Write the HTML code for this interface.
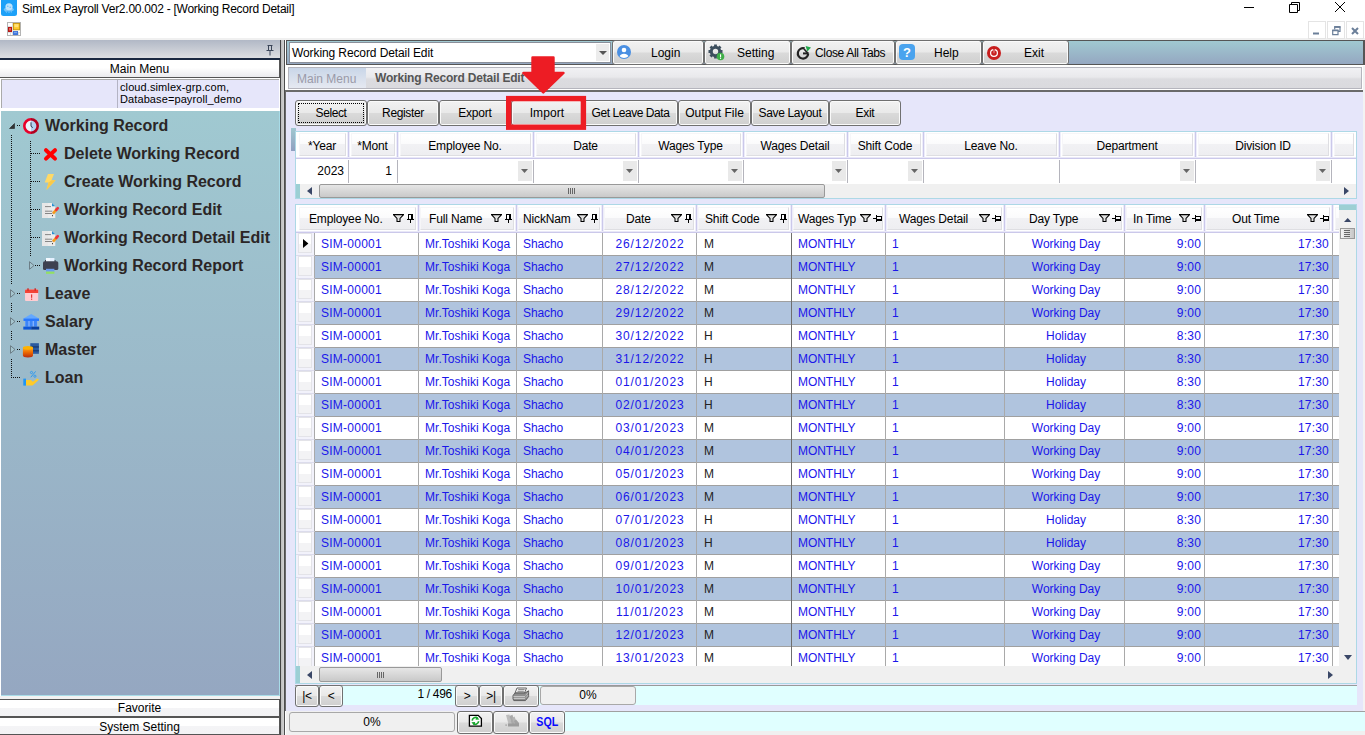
<!DOCTYPE html><html><head><meta charset="utf-8"><title>SimLex Payroll</title><style>
*{box-sizing:border-box;margin:0;padding:0}
html,body{width:1365px;height:735px;overflow:hidden;background:#fff}
body{font-family:"Liberation Sans",sans-serif;font-size:12px;color:#000;position:relative}
.a{position:absolute}
.t{position:absolute;white-space:pre;line-height:14px}
.c{text-align:center}
.r{text-align:right}
/* left panel */
#lp-head{left:0;top:40px;width:280px;height:20px;background:linear-gradient(#b1b8c6,#dddee1);border-bottom:2px solid #1a2840}
#lp-mm{left:0;top:60px;width:280px;height:18px;background:linear-gradient(#ffffff 0,#ffffff 45%,#ebebee 100%);border-bottom:1px solid #555;border-right:1px solid #555}
#lp-info{left:1px;top:79px;width:278px;height:29px;background:#e6e6fa;border-top:1px solid #aaa;border-left:1px solid #aaa}
#lp-tree{left:1px;top:111px;width:279px;height:585px;border-bottom:1px solid #a8dce8;border-right:1px solid #a8dce8;background:linear-gradient(#a0c9d1,#95a7c1)}
.bar{left:0;width:280px;background:linear-gradient(#ffffff 0,#ffffff 50%,#f4f4f6 50%,#f3f3f5 100%);border-right:1px solid #555}
.tn{position:absolute;white-space:pre;font-weight:700;font-size:16px;line-height:20px;color:#2b2626}
/* splitter */
#split{left:280px;top:40px;width:6px;height:695px;background:linear-gradient(90deg,#444 0,#444 1px,#bdbdbd 1px,#d2d2d2 4px,#4d4d4d 4px,#4d4d4d 5px,#fff 5px)}
/* right */
#tb{left:286px;top:40px;width:1079px;height:25px;background:linear-gradient(#a0c9d1,#95a7c1);border:1px solid #555;border-right:2px solid #555}
.tbb{position:absolute;top:40px;height:25px;border:1px solid #6f6f6f;border-radius:3px;box-shadow:inset 0 0 0 1px #fafafa;background:linear-gradient(#f2f2f2 0,#e9e9e9 48%,#dadada 52%,#cfcfcf 100%)}
#tabs{left:288px;top:67px;width:1074px;height:22px;background:linear-gradient(#f1f1f4 0,#e9e9ec 45%,#dcdce0 55%,#dadade 100%);border:1px solid #b5b5bd}
#content{left:285px;top:90px;width:1078px;height:621px;background:#e6e6fa;border-top:2px solid #6a6a6a;border-left:1px solid #6a6a6a}
.btn{position:absolute;top:100px;height:26px;letter-spacing:-0.3px;white-space:nowrap;border:1px solid #707070;border-radius:3px;box-shadow:inset 0 0 0 1px #fafafa;background:linear-gradient(#f2f2f2 0,#e9e9e9 48%,#dadada 52%,#cfcfcf 100%);text-align:center;line-height:24px;font-size:12px}
.hb{position:absolute;height:23px;border:1px solid;border-color:#f6f6f8 #dedee2 #dedee2 #f6f6f8;background:linear-gradient(#ffffff 0,#fbfbfc 48%,#f1f1f4 50%,#eeeef1 100%)}
.hs{position:absolute;width:3px;background:linear-gradient(90deg,#ededfa 0,#ededfa 1px,#cbc8ea 1px,#cbc8ea 2px,#ededfa 2px)}
.hl{position:absolute;height:2px;background:linear-gradient(#e9e8f8 0,#e9e8f8 1px,#cbc8ea 1px)}
.hc{position:absolute;border:1px solid #d3cfee;background:linear-gradient(#ffffff 0,#fafafb 50%,#f0f0f3 50%,#ececf0 100%);box-shadow:inset 0 0 0 2px #fcfcff,inset -3px -3px 0 0 #e2e2e6}
.row{position:absolute;left:315px;width:1024px;height:23px;border-bottom:1px solid #a5a5a5}
.vl{position:absolute;width:1px;background:#a9a9a9}
.bl{color:#1a16ea}
</style></head><body>
<div class="a" style="left:0;top:38px;width:1365px;height:2px;background:#f0f0f0"></div>
<svg class="a" style="left:1px;top:0" width="16" height="16" viewBox="0 0 16 16"><path d="M0 0H16V13.5A2.5 2.5 0 0 1 13.5 16H2.5A2.5 2.5 0 0 1 0 13.5Z" fill="#1da1f8"/><ellipse cx="8" cy="6.8" rx="3.6" ry="3.5" fill="#d9eefd" opacity=".85"/><ellipse cx="7.8" cy="9.4" rx="5" ry="2" fill="#bfe2fb" opacity=".55"/><path d="M4.5 11.5L6 12.5M8 11.8V13M11 11.5L9.8 12.6" stroke="#bfe2fb" stroke-width=".8" opacity=".7"/><circle cx="6.8" cy="6.3" r=".7" fill="#5bb8f8"/><circle cx="9.2" cy="7.2" r=".7" fill="#5bb8f8"/></svg>
<div class="t" style="left:22px;top:2px;font-size:12px;letter-spacing:-0.25px">SimLex Payroll Ver2.00.002 - [Working Record Detail]</div>
<svg class="a" style="left:1230px;top:0" width="135" height="20" viewBox="0 0 135 20"><g stroke="#000" stroke-width="1" fill="none"><path d="M14 7.5H24"/><path d="M59.5 4.5h8v8h-8z M61.5 4.5v-2h8v8h-2" /><path d="M105 2L115 12M115 2L105 12"/></g></svg>
<svg class="a" style="left:7px;top:22px" width="14" height="14" viewBox="0 0 14 14"><rect x="0.5" y="0.5" width="13" height="13" fill="#fff" stroke="#b4b4b4"/><path d="M5.5 1V13M1 4.5H5.5M1 10.5H13M11.5 10.5V13M3.5 10.5V13" stroke="#d8d8d8" stroke-width=".8"/><rect x="1" y="5" width="4" height="5" fill="#b81414"/><rect x="2" y="6" width="2" height="2.5" fill="#e06a5a"/><rect x="6.4" y="1.4" width="6.2" height="6.4" fill="#ffc928" stroke="#c39206" stroke-width=".9"/><rect x="7.4" y="2.2" width="4" height="3" fill="#ffe27a"/><rect x="6" y="9" width="5" height="4" fill="#3f74d8"/><rect x="7" y="9.8" width="3" height="1.4" fill="#7aa5f0"/></svg>
<svg class="a" style="left:1308px;top:21px" width="57" height="18" viewBox="0 0 57 18"><g fill="none" stroke="#e4e4e4"><rect x="0.5" y="0.5" width="17" height="17"/><rect x="19.5" y="0.5" width="17" height="17"/><rect x="38.5" y="0.5" width="17" height="17"/></g><g stroke="#6b7f99" fill="none"><path d="M5 12.5h6" stroke-width="2"/><path d="M26.7 8.6V6.2h5.3v4.2h-1.6 M24.7 9.6h5.3v4h-5.3z" stroke-width="1.2"/><path d="M26.2 5.9h6.3M24.2 9.3h6.3" stroke-width="1.6"/><path d="M44 7l6 6M50 7l-6 6" stroke-width="2"/></g></svg>
<div class="a" id="lp-head"></div>
<svg class="a" style="left:266px;top:45px" width="8" height="11" viewBox="0 0 8 11"><path d="M1.5 0.5h5M2.5 0.5v5M5.5 0.5v5M0.5 5.5h7M4 6v4.5" stroke="#3a4558" fill="none"/></svg>
<div class="a" id="lp-mm"></div><div class="t c" style="left:0;top:62px;width:279px">Main Menu</div>
<div class="a" id="lp-info"></div><div class="a" style="left:117px;top:80px;width:1px;height:28px;background:#b4b4c4"></div>
<div class="t" style="left:120px;top:81px;font-size:11px;line-height:12px;letter-spacing:0.1px">cloud.simlex-grp.com,
Database=payroll_demo</div>
<div class="a" id="lp-tree"></div>
<div class="a" style="left:11px;top:135px;width:1px;height:150px;background:repeating-linear-gradient(#111 0,#111 1px,transparent 1px,transparent 2px)"></div>
<div class="a" style="left:11px;top:303px;width:1px;height:10px;background:repeating-linear-gradient(#111 0,#111 1px,transparent 1px,transparent 2px)"></div>
<div class="a" style="left:11px;top:331px;width:1px;height:10px;background:repeating-linear-gradient(#111 0,#111 1px,transparent 1px,transparent 2px)"></div>
<div class="a" style="left:11px;top:359px;width:1px;height:19px;background:repeating-linear-gradient(#111 0,#111 1px,transparent 1px,transparent 2px)"></div>
<div class="a" style="left:30px;top:141px;width:1px;height:116px;background:repeating-linear-gradient(#111 0,#111 1px,transparent 1px,transparent 2px)"></div>
<div class="a" style="left:17px;top:125px;width:4px;height:1px;background:repeating-linear-gradient(90deg,#111 0,#111 1px,transparent 1px,transparent 2px)"></div>
<div class="a" style="left:31px;top:153px;width:9px;height:1px;background:repeating-linear-gradient(90deg,#111 0,#111 1px,transparent 1px,transparent 2px)"></div>
<div class="a" style="left:31px;top:181px;width:9px;height:1px;background:repeating-linear-gradient(90deg,#111 0,#111 1px,transparent 1px,transparent 2px)"></div>
<div class="a" style="left:31px;top:209px;width:9px;height:1px;background:repeating-linear-gradient(90deg,#111 0,#111 1px,transparent 1px,transparent 2px)"></div>
<div class="a" style="left:31px;top:237px;width:9px;height:1px;background:repeating-linear-gradient(90deg,#111 0,#111 1px,transparent 1px,transparent 2px)"></div>
<div class="a" style="left:35px;top:265px;width:5px;height:1px;background:repeating-linear-gradient(90deg,#111 0,#111 1px,transparent 1px,transparent 2px)"></div>
<div class="a" style="left:17px;top:293px;width:4px;height:1px;background:repeating-linear-gradient(90deg,#111 0,#111 1px,transparent 1px,transparent 2px)"></div>
<div class="a" style="left:17px;top:321px;width:4px;height:1px;background:repeating-linear-gradient(90deg,#111 0,#111 1px,transparent 1px,transparent 2px)"></div>
<div class="a" style="left:17px;top:349px;width:4px;height:1px;background:repeating-linear-gradient(90deg,#111 0,#111 1px,transparent 1px,transparent 2px)"></div>
<div class="a" style="left:11px;top:377px;width:9px;height:1px;background:repeating-linear-gradient(90deg,#111 0,#111 1px,transparent 1px,transparent 2px)"></div>
<svg class="a" style="left:9px;top:123px" width="6" height="6" viewBox="0 0 6 6"><path d="M5.5 0.5V5.5H0.5Z" fill="#333" stroke="#222" stroke-width=".6"/></svg>
<svg class="a" style="left:29px;top:261px" width="6" height="9" viewBox="0 0 6 9"><path d="M0.5 0.7L5 4.5L0.5 8.3Z" fill="#a5c5cf" stroke="#66767f" stroke-width=".9"/></svg>
<svg class="a" style="left:10px;top:289px" width="6" height="9" viewBox="0 0 6 9"><path d="M0.5 0.7L5 4.5L0.5 8.3Z" fill="#a5c5cf" stroke="#66767f" stroke-width=".9"/></svg>
<svg class="a" style="left:10px;top:317px" width="6" height="9" viewBox="0 0 6 9"><path d="M0.5 0.7L5 4.5L0.5 8.3Z" fill="#a5c5cf" stroke="#66767f" stroke-width=".9"/></svg>
<svg class="a" style="left:10px;top:345px" width="6" height="9" viewBox="0 0 6 9"><path d="M0.5 0.7L5 4.5L0.5 8.3Z" fill="#a5c5cf" stroke="#66767f" stroke-width=".9"/></svg>
<svg class="a" style="left:20px;top:114px" width="42" height="276" viewBox="20 114 42 276">
<defs><clipPath id="cl"><rect x="20" y="114" width="11" height="30"/></clipPath><clipPath id="cr"><rect x="31" y="114" width="11" height="30"/></clipPath></defs>
<circle cx="31" cy="126" r="6.7" fill="#edf3fb" stroke="#e8002a" stroke-width="2.6" clip-path="url(#cl)"/><circle cx="31" cy="126" r="6.7" fill="#b3d1f1" stroke="#b3001f" stroke-width="2.6" clip-path="url(#cr)"/><path d="M31 122.3V126.3L32.8 127.6" stroke="#2c3a55" stroke-width="1" fill="none"/>
<path d="M46 150.2L55 158.6M55 150.2L46 158.6" stroke="#ff0000" stroke-width="4" stroke-linecap="round"/>
<path d="M48 174H54L51.5 180.2H55.6L46.4 189.9L48.6 182.6H44.7Z" fill="#ffd966"/><path d="M51.5 180.2H55.6L46.4 189.9L48.6 182.6Z" fill="#f9c94a"/>
<g transform="translate(0,0)"><path d="M42 203H52L55.3 206.3V218H42Z" fill="#ececec"/><path d="M42 203H48V218H42Z" fill="#e4e4e4" opacity=".6"/><path d="M52 203L55.3 206.3H52Z" fill="#2a8fd0"/><path d="M45 206.6H51M45 211.2H52.3M45 213.5H52.3" stroke="#7b7b7b" stroke-width="0.9"/><path d="M53 213.6L56.7 209.2" stroke="#f39a1e" stroke-width="2.6" stroke-linecap="butt"/><path d="M56.3 209.8L57.8 208.1" stroke="#f0303a" stroke-width="2.6" stroke-linecap="round"/><path d="M52 214.2L53.6 214.9L51.9 216.2Z" fill="#f7e3c2"/><rect x="52" y="215.2" width="1" height="1" fill="#222"/></g>
<g transform="translate(0,28)"><path d="M42 203H52L55.3 206.3V218H42Z" fill="#ececec"/><path d="M42 203H48V218H42Z" fill="#e4e4e4" opacity=".6"/><path d="M52 203L55.3 206.3H52Z" fill="#2a8fd0"/><path d="M45 206.6H51M45 211.2H52.3M45 213.5H52.3" stroke="#7b7b7b" stroke-width="0.9"/><path d="M53 213.6L56.7 209.2" stroke="#f39a1e" stroke-width="2.6" stroke-linecap="butt"/><path d="M56.3 209.8L57.8 208.1" stroke="#f0303a" stroke-width="2.6" stroke-linecap="round"/><path d="M52 214.2L53.6 214.9L51.9 216.2Z" fill="#f7e3c2"/><rect x="52" y="215.2" width="1" height="1" fill="#222"/></g>
<rect x="46" y="258" width="8.4" height="4.5" fill="#e4f0ff"/><rect x="46" y="258" width="4" height="4.5" fill="#f4f9ff"/><rect x="43" y="261.3" width="15.3" height="8.8" rx="1.6" fill="#3d4150"/><rect x="45" y="260" width="1" height="2" fill="#3d4150"/><rect x="54.6" y="260" width="1" height="2" fill="#3d4150"/><rect x="46" y="268.8" width="8.4" height="2.8" fill="#6a9cf0"/><rect x="46" y="271.6" width="8.4" height="2.2" fill="#93e062"/>
<rect x="25" y="289.6" width="13.2" height="11.3" rx="1" fill="#ffcdd2"/><path d="M25 290.4a1 1 0 0 1 1-1h11.2a1 1 0 0 1 1 1V293H25Z" fill="#f44336"/><rect x="27.3" y="288.3" width="1.4" height="2.4" fill="#c62828"/><rect x="34.5" y="288.3" width="1.4" height="2.4" fill="#c62828"/><rect x="31" y="294.4" width="1.2" height="3.4" fill="#e53935"/><rect x="31" y="298.6" width="1.2" height="1.2" fill="#e53935"/>
<path d="M31.2 314L39 318.4V319H23.5V318.4Z" fill="#64a8ff"/><rect x="23.5" y="318.6" width="15.5" height="2.4" fill="#2979ff"/><rect x="25" y="321" width="12.4" height="5.6" fill="#82b1ff"/><rect x="25.4" y="321" width="2.9" height="5.6" fill="#3d86f7"/><rect x="29.7" y="321" width="2.9" height="5.6" fill="#3d86f7"/><rect x="34" y="321" width="2.9" height="5.6" fill="#3d86f7"/><rect x="23.3" y="326.6" width="8" height="3" fill="#0d57d8"/><rect x="31.2" y="326.6" width="8" height="3" fill="#0a3f9e"/>
<defs><linearGradient id="cy" x1="0" y1="0" x2="0" y2="1"><stop offset="0" stop-color="#f9a825"/><stop offset=".45" stop-color="#ef6c00"/><stop offset="1" stop-color="#b72d10"/></linearGradient></defs>
<rect x="30.3" y="343.2" width="8.6" height="10.6" fill="#2a5aa0"/><rect x="30.3" y="346.2" width="8.6" height="1.5" fill="#1a3e78"/><rect x="30.3" y="350" width="8.6" height="1.5" fill="#1a3e78"/><path d="M22.9 347.8V355.6A5.05 1.9 0 0 0 33 355.6V347.8Z" fill="url(#cy)"/><ellipse cx="27.95" cy="347.8" rx="5.05" ry="1.9" fill="#ffb300"/>
<rect x="23.3" y="378.6" width="2.7" height="7" fill="#2196f3"/><path d="M26 380H31L32.8 381.8L37.4 378.4L38.9 379.8L32.6 385.6H26Z" fill="#ffca28"/><path d="M30.8 377.3L35.6 371.4" stroke="#2196f3" stroke-width="0.9"/><circle cx="31.5" cy="372.5" r="1.1" fill="none" stroke="#2196f3" stroke-width=".8"/><circle cx="34.9" cy="376.2" r="1.1" fill="none" stroke="#2196f3" stroke-width=".8"/>
</svg>
<div class="tn" style="left:45px;top:116px">Working Record</div>
<div class="tn" style="left:64px;top:144px">Delete Working Record</div>
<div class="tn" style="left:64px;top:172px">Create Working Record</div>
<div class="tn" style="left:64px;top:200px">Working Record Edit</div>
<div class="tn" style="left:64px;top:228px">Working Record Detail Edit</div>
<div class="tn" style="left:64px;top:256px">Working Record Report</div>
<div class="tn" style="left:45px;top:284px">Leave</div>
<div class="tn" style="left:45px;top:312px">Salary</div>
<div class="tn" style="left:45px;top:340px">Master</div>
<div class="tn" style="left:45px;top:368px">Loan</div>
<div class="a" style="left:0;top:696px;width:280px;height:3px;background:#f2f2f2"></div>
<div class="a bar" style="top:699px;height:19px;border-top:1px solid #555;border-bottom:2px solid #555"></div><div class="t c" style="left:0;top:701px;width:279px">Favorite</div>
<div class="a bar" style="top:718px;height:17px;border-bottom:1px solid #555"></div><div class="t c" style="left:0;top:720px;width:279px">System Setting</div>
<div class="a" id="split"></div>
<div class="a" id="tb"></div>
<div class="a" style="left:289px;top:42px;width:322px;height:21px;background:#fff;border:1px solid #8a8f9a"></div>
<div class="t" style="left:292px;top:46px;letter-spacing:-0.1px">Working Record Detail Edit</div>
<div class="a" style="left:596px;top:44px;width:13px;height:17px;background:#ececec"></div><svg class="a" style="left:599px;top:51px" width="8" height="4"><path d="M0 0H8L4 4Z" fill="#555"/></svg>
<div class="tbb" style="left:612px;width:92px"></div>
<svg class="a" style="left:617px;top:45px" width="14" height="14" viewBox="0 0 14 14"><circle cx="7" cy="7" r="7" fill="#4a8fe2"/><circle cx="7" cy="5" r="2.3" fill="#fff"/><path d="M2.6 11.2A4.6 3.6 0 0 1 11.4 11.2A6.2 6.2 0 0 1 2.6 11.2Z" fill="#fff"/></svg>
<div class="t" style="left:651px;top:46px">Login</div>
<div class="tbb" style="left:704px;width:87px"></div>
<svg class="a" style="left:708px;top:44px" width="17" height="17" viewBox="0 0 17 17"><circle cx="7.5" cy="7.5" r="4.2" fill="none" stroke="#3d4f5e" stroke-width="3"/><g stroke="#3d4f5e" stroke-width="2.8"><path d="M7.5 0.5v3M7.5 11.5v3M0.5 7.5h3M11.5 7.5h3M2.5 2.5l2 2M10.5 10.5l2 2M12.5 2.5l-2 2M4.5 10.5l-2 2"/></g><circle cx="12.5" cy="12.5" r="3.8" fill="#3fae49"/><rect x="12" y="10.3" width="1.1" height="3" fill="#fff"/><rect x="12" y="13.8" width="1.1" height="1.1" fill="#fff"/></svg>
<div class="t" style="left:737px;top:46px">Setting</div>
<div class="tbb" style="left:791px;width:104px"></div>
<svg class="a" style="left:795px;top:45px" width="17" height="16" viewBox="0 0 17 16"><path d="M13.2 8.6A5.2 5.2 0 1 1 9.6 3.4" fill="none" stroke="#222" stroke-width="2.2"/><path d="M8 8.4H13.6" stroke="#222" stroke-width="2"/><path d="M9 4L13 8.4" stroke="#222" stroke-width="1.6"/><path d="M10.6 1L16 2.6L12.4 6.4Z" fill="#1fa84a"/></svg>
<div class="t" style="left:815px;top:46px;letter-spacing:-0.35px">Close All Tabs</div>
<div class="tbb" style="left:895px;width:87px"></div>
<svg class="a" style="left:899px;top:44px" width="16" height="16" viewBox="0 0 16 16"><rect width="16" height="16" rx="4" fill="#4aa3ee"/><text x="8" y="13" font-family="Liberation Sans" font-size="13" font-weight="700" text-anchor="middle" fill="#fff">?</text></svg>
<div class="t" style="left:934px;top:46px">Help</div>
<div class="tbb" style="left:982px;width:87px"></div>
<svg class="a" style="left:987px;top:46px" width="14" height="14" viewBox="0 0 14 14"><circle cx="7" cy="7" r="7" fill="#c81e1e"/><circle cx="7" cy="7" r="3.4" fill="none" stroke="#fff" stroke-width="1.2"/><rect x="6.3" y="3" width="1.4" height="4.2" fill="#fff" stroke="#c81e1e" stroke-width=".6"/></svg>
<div class="t" style="left:1024px;top:46px">Exit</div>
<div class="a" id="tabs"></div>
<div class="a" style="left:289px;top:68px;width:77px;height:20px;background:linear-gradient(#c9d6e8,#e6e9f1)"></div>
<div class="t" style="left:297px;top:72px;color:#9a9aa8;font-size:12px">Main Menu</div>
<div class="t" style="left:375px;top:71px;color:#555;font-weight:700;font-size:12px;letter-spacing:-0.2px">Working Record Detail Edit</div>
<div class="a" id="content"></div><div class="a" style="left:1363px;top:66px;width:2px;height:645px;background:#f3f3f3"></div>
<div class="btn" style="left:295px;width:72px;letter-spacing:-0.42px">Select</div>
<div class="btn" style="left:367px;width:72px;letter-spacing:-0.36px">Register</div>
<div class="btn" style="left:439px;width:72px;letter-spacing:-0.2px">Export</div>
<div class="btn" style="left:511px;width:72px;letter-spacing:0.1px">Import</div>
<div class="btn" style="left:583px;width:95px;letter-spacing:-0.45px">Get Leave Data</div>
<div class="btn" style="left:678px;width:73px;letter-spacing:0px">Output File</div>
<div class="btn" style="left:751px;width:78px;letter-spacing:-0.35px">Save Layout</div>
<div class="btn" style="left:829px;width:72px;letter-spacing:-0.3px">Exit</div>
<div class="a" style="left:298px;top:103px;width:66px;height:20px;border:1px dotted #000"></div>
<svg class="a" style="left:500px;top:50px" width="100" height="85" viewBox="500 50 100 85"><rect x="508.7" y="98.6" width="74.7" height="28.6" fill="none" stroke="#ed1c24" stroke-width="5.4"/><path d="M532.5 57.5H553.5V73H563.5L543.3 92.5L523.3 73H532.5Z" fill="#ed1c24" stroke="#ed1c24" stroke-width="2.4" stroke-linejoin="round"/></svg>
<div class="a" style="left:291px;top:128px;width:5px;height:23px;background:linear-gradient(#a0c8d0,#8f9fc0)"></div>
<div class="a" style="left:295px;top:131px;width:1062px;height:68px;background:#fff;border:1px solid #add8e6"></div>
<div class="hb" style="left:299px;top:133px;width:47px"></div>
<div class="hs" style="left:347px;top:132px;height:27px"></div>
<div class="t c" style="left:296px;top:139px;width:52px;letter-spacing:-0.15px">*Year</div>
<div class="hb" style="left:351px;top:133px;width:44px"></div>
<div class="hs" style="left:396px;top:132px;height:27px"></div>
<div class="t c" style="left:348px;top:139px;width:49px;letter-spacing:-0.15px">*Mont</div>
<div class="hb" style="left:400px;top:133px;width:131px"></div>
<div class="hs" style="left:532px;top:132px;height:27px"></div>
<div class="t c" style="left:397px;top:139px;width:136px;letter-spacing:-0.15px">Employee No.</div>
<div class="hb" style="left:536px;top:133px;width:100px"></div>
<div class="hs" style="left:637px;top:132px;height:27px"></div>
<div class="t c" style="left:533px;top:139px;width:105px;letter-spacing:-0.15px">Date</div>
<div class="hb" style="left:641px;top:133px;width:100px"></div>
<div class="hs" style="left:742px;top:132px;height:27px"></div>
<div class="t c" style="left:638px;top:139px;width:105px;letter-spacing:-0.15px">Wages Type</div>
<div class="hb" style="left:746px;top:133px;width:99px"></div>
<div class="hs" style="left:846px;top:132px;height:27px"></div>
<div class="t c" style="left:743px;top:139px;width:104px;letter-spacing:-0.15px">Wages Detail</div>
<div class="hb" style="left:850px;top:133px;width:71px"></div>
<div class="hs" style="left:922px;top:132px;height:27px"></div>
<div class="t c" style="left:847px;top:139px;width:76px;letter-spacing:-0.15px">Shift Code</div>
<div class="hb" style="left:926px;top:133px;width:131px"></div>
<div class="hs" style="left:1058px;top:132px;height:27px"></div>
<div class="t c" style="left:923px;top:139px;width:136px;letter-spacing:-0.15px">Leave No.</div>
<div class="hb" style="left:1062px;top:133px;width:131px"></div>
<div class="hs" style="left:1194px;top:132px;height:27px"></div>
<div class="t c" style="left:1059px;top:139px;width:136px;letter-spacing:-0.15px">Department</div>
<div class="hb" style="left:1198px;top:133px;width:131px"></div>
<div class="hs" style="left:1330px;top:132px;height:27px"></div>
<div class="t c" style="left:1195px;top:139px;width:136px;letter-spacing:-0.15px">Division ID</div>
<div class="hb" style="left:1334px;top:133px;width:20px"></div>
<div class="hl" style="left:296px;top:157px;width:1060px"></div>
<div class="vl" style="left:348px;top:160px;height:23px;background:#b4b4bc"></div>
<div class="vl" style="left:397px;top:160px;height:23px;background:#b4b4bc"></div>
<div class="vl" style="left:533px;top:160px;height:23px;background:#b4b4bc"></div>
<div class="vl" style="left:638px;top:160px;height:23px;background:#b4b4bc"></div>
<div class="vl" style="left:743px;top:160px;height:23px;background:#b4b4bc"></div>
<div class="vl" style="left:847px;top:160px;height:23px;background:#b4b4bc"></div>
<div class="vl" style="left:923px;top:160px;height:23px;background:#b4b4bc"></div>
<div class="vl" style="left:1059px;top:160px;height:23px;background:#b4b4bc"></div>
<div class="vl" style="left:1195px;top:160px;height:23px;background:#b4b4bc"></div>
<div class="vl" style="left:1331px;top:160px;height:23px;background:#b4b4bc"></div>
<div class="t r" style="left:296px;top:164px;width:48px">2023</div>
<div class="t r" style="left:348px;top:164px;width:44px">1</div>
<div class="a" style="left:518px;top:161px;width:14px;height:20px;background:#e9e9e9"></div><svg class="a" style="left:521px;top:169px" width="7" height="4"><path d="M0 0H7L3.5 4Z" fill="#666"/></svg>
<div class="a" style="left:623px;top:161px;width:14px;height:20px;background:#e9e9e9"></div><svg class="a" style="left:626px;top:169px" width="7" height="4"><path d="M0 0H7L3.5 4Z" fill="#666"/></svg>
<div class="a" style="left:728px;top:161px;width:14px;height:20px;background:#e9e9e9"></div><svg class="a" style="left:731px;top:169px" width="7" height="4"><path d="M0 0H7L3.5 4Z" fill="#666"/></svg>
<div class="a" style="left:832px;top:161px;width:14px;height:20px;background:#e9e9e9"></div><svg class="a" style="left:835px;top:169px" width="7" height="4"><path d="M0 0H7L3.5 4Z" fill="#666"/></svg>
<div class="a" style="left:908px;top:161px;width:14px;height:20px;background:#e9e9e9"></div><svg class="a" style="left:911px;top:169px" width="7" height="4"><path d="M0 0H7L3.5 4Z" fill="#666"/></svg>
<div class="a" style="left:1180px;top:161px;width:14px;height:20px;background:#e9e9e9"></div><svg class="a" style="left:1183px;top:169px" width="7" height="4"><path d="M0 0H7L3.5 4Z" fill="#666"/></svg>
<div class="a" style="left:1316px;top:161px;width:14px;height:20px;background:#e9e9e9"></div><svg class="a" style="left:1319px;top:169px" width="7" height="4"><path d="M0 0H7L3.5 4Z" fill="#666"/></svg>
<div class="a" style="left:296px;top:184px;width:1060px;height:14px;background:#f0f0f0"></div><div class="a" style="left:296px;top:184px;width:4px;height:14px;background:#9ccfd4"></div>
<svg class="a" style="left:307px;top:187px" width="5" height="8"><path d="M5 0V8L0 4Z" fill="#3a4767"/></svg><svg class="a" style="left:1344px;top:187px" width="5" height="8"><path d="M0 0V8L5 4Z" fill="#3a4767"/></svg>
<div class="a" style="left:319px;top:184px;width:506px;height:14px;border:1px solid #999;border-radius:2px;background:linear-gradient(#e6e6e6,#c9c9c9)"></div>
<div class="a" style="left:568px;top:188px;width:8px;height:6px;background:repeating-linear-gradient(90deg,#666 0,#666 1px,transparent 1px,transparent 2px)"></div>
<div class="a" style="left:295px;top:204px;width:1062px;height:480px;background:#fff;border:1px solid #add8e6"></div>
<div class="hb" style="left:299px;top:207px;width:117px"></div>
<div class="hs" style="left:417px;top:205px;height:27px"></div>
<div class="t" style="left:309px;top:212px;letter-spacing:-0.15px">Employee No.</div>
<svg class="a" style="left:393px;top:214px" width="11" height="8" viewBox="0 0 11 8"><path d="M0.4 0.6H10.6L7 4.4V7.5H4V4.4Z" fill="#e2e2e2" stroke="#000" stroke-width="1.05" stroke-linejoin="miter"/></svg>
<svg class="a" style="left:407px;top:214px" width="7" height="9" viewBox="0 0 7 9" shape-rendering="crispEdges"><path d="M1 0.5h5M1.5 0v5M5 0v5M0 5.5h7M3.5 6v3" stroke="#000" fill="none"/><path d="M5 0v5" stroke="#000" stroke-width="2"/></svg>
<div class="hb" style="left:420px;top:207px;width:94px"></div>
<div class="hs" style="left:515px;top:205px;height:27px"></div>
<div class="t" style="left:429px;top:212px;letter-spacing:-0.15px">Full Name</div>
<svg class="a" style="left:491px;top:214px" width="11" height="8" viewBox="0 0 11 8"><path d="M0.4 0.6H10.6L7 4.4V7.5H4V4.4Z" fill="#e2e2e2" stroke="#000" stroke-width="1.05" stroke-linejoin="miter"/></svg>
<svg class="a" style="left:505px;top:214px" width="7" height="9" viewBox="0 0 7 9" shape-rendering="crispEdges"><path d="M1 0.5h5M1.5 0v5M5 0v5M0 5.5h7M3.5 6v3" stroke="#000" fill="none"/><path d="M5 0v5" stroke="#000" stroke-width="2"/></svg>
<div class="hb" style="left:518px;top:207px;width:82px"></div>
<div class="hs" style="left:601px;top:205px;height:27px"></div>
<div class="t" style="left:523px;top:212px;letter-spacing:-0.15px">NickNam</div>
<svg class="a" style="left:577px;top:214px" width="11" height="8" viewBox="0 0 11 8"><path d="M0.4 0.6H10.6L7 4.4V7.5H4V4.4Z" fill="#e2e2e2" stroke="#000" stroke-width="1.05" stroke-linejoin="miter"/></svg>
<svg class="a" style="left:591px;top:214px" width="7" height="9" viewBox="0 0 7 9" shape-rendering="crispEdges"><path d="M1 0.5h5M1.5 0v5M5 0v5M0 5.5h7M3.5 6v3" stroke="#000" fill="none"/><path d="M5 0v5" stroke="#000" stroke-width="2"/></svg>
<div class="hb" style="left:604px;top:207px;width:90px"></div>
<div class="hs" style="left:695px;top:205px;height:27px"></div>
<div class="t" style="left:626px;top:212px;letter-spacing:-0.15px">Date</div>
<svg class="a" style="left:671px;top:214px" width="11" height="8" viewBox="0 0 11 8"><path d="M0.4 0.6H10.6L7 4.4V7.5H4V4.4Z" fill="#e2e2e2" stroke="#000" stroke-width="1.05" stroke-linejoin="miter"/></svg>
<svg class="a" style="left:685px;top:214px" width="7" height="9" viewBox="0 0 7 9" shape-rendering="crispEdges"><path d="M1 0.5h5M1.5 0v5M5 0v5M0 5.5h7M3.5 6v3" stroke="#000" fill="none"/><path d="M5 0v5" stroke="#000" stroke-width="2"/></svg>
<div class="hb" style="left:698px;top:207px;width:91px"></div>
<div class="hs" style="left:790px;top:205px;height:27px"></div>
<div class="t" style="left:705px;top:212px;letter-spacing:-0.15px">Shift Code</div>
<svg class="a" style="left:766px;top:214px" width="11" height="8" viewBox="0 0 11 8"><path d="M0.4 0.6H10.6L7 4.4V7.5H4V4.4Z" fill="#e2e2e2" stroke="#000" stroke-width="1.05" stroke-linejoin="miter"/></svg>
<svg class="a" style="left:780px;top:214px" width="7" height="9" viewBox="0 0 7 9" shape-rendering="crispEdges"><path d="M1 0.5h5M1.5 0v5M5 0v5M0 5.5h7M3.5 6v3" stroke="#000" fill="none"/><path d="M5 0v5" stroke="#000" stroke-width="2"/></svg>
<div class="hb" style="left:793px;top:207px;width:90px"></div>
<div class="hs" style="left:884px;top:205px;height:27px"></div>
<div class="t" style="left:798px;top:212px;letter-spacing:-0.15px">Wages Typ</div>
<svg class="a" style="left:860px;top:214px" width="11" height="8" viewBox="0 0 11 8"><path d="M0.4 0.6H10.6L7 4.4V7.5H4V4.4Z" fill="#e2e2e2" stroke="#000" stroke-width="1.05" stroke-linejoin="miter"/></svg>
<svg class="a" style="left:873px;top:215px" width="9" height="7" viewBox="0 0 9 7" shape-rendering="crispEdges"><path d="M0 3.5h3M3.5 0v7M4 1.5h5M8.5 1v5" stroke="#000" fill="none"/><path d="M4 5h5" stroke="#000" stroke-width="2"/></svg>
<div class="hb" style="left:887px;top:207px;width:115px"></div>
<div class="hs" style="left:1003px;top:205px;height:27px"></div>
<div class="t" style="left:899px;top:212px;letter-spacing:-0.15px">Wages Detail</div>
<svg class="a" style="left:979px;top:214px" width="11" height="8" viewBox="0 0 11 8"><path d="M0.4 0.6H10.6L7 4.4V7.5H4V4.4Z" fill="#e2e2e2" stroke="#000" stroke-width="1.05" stroke-linejoin="miter"/></svg>
<svg class="a" style="left:992px;top:215px" width="9" height="7" viewBox="0 0 9 7" shape-rendering="crispEdges"><path d="M0 3.5h3M3.5 0v7M4 1.5h5M8.5 1v5" stroke="#000" fill="none"/><path d="M4 5h5" stroke="#000" stroke-width="2"/></svg>
<div class="hb" style="left:1006px;top:207px;width:116px"></div>
<div class="hs" style="left:1123px;top:205px;height:27px"></div>
<div class="t" style="left:1029px;top:212px;letter-spacing:-0.15px">Day Type</div>
<svg class="a" style="left:1099px;top:214px" width="11" height="8" viewBox="0 0 11 8"><path d="M0.4 0.6H10.6L7 4.4V7.5H4V4.4Z" fill="#e2e2e2" stroke="#000" stroke-width="1.05" stroke-linejoin="miter"/></svg>
<svg class="a" style="left:1112px;top:215px" width="9" height="7" viewBox="0 0 9 7" shape-rendering="crispEdges"><path d="M0 3.5h3M3.5 0v7M4 1.5h5M8.5 1v5" stroke="#000" fill="none"/><path d="M4 5h5" stroke="#000" stroke-width="2"/></svg>
<div class="hb" style="left:1126px;top:207px;width:76px"></div>
<div class="hs" style="left:1203px;top:205px;height:27px"></div>
<div class="t" style="left:1133px;top:212px;letter-spacing:-0.15px">In Time</div>
<svg class="a" style="left:1179px;top:214px" width="11" height="8" viewBox="0 0 11 8"><path d="M0.4 0.6H10.6L7 4.4V7.5H4V4.4Z" fill="#e2e2e2" stroke="#000" stroke-width="1.05" stroke-linejoin="miter"/></svg>
<svg class="a" style="left:1192px;top:215px" width="9" height="7" viewBox="0 0 9 7" shape-rendering="crispEdges"><path d="M0 3.5h3M3.5 0v7M4 1.5h5M8.5 1v5" stroke="#000" fill="none"/><path d="M4 5h5" stroke="#000" stroke-width="2"/></svg>
<div class="hb" style="left:1206px;top:207px;width:124px"></div>
<div class="hs" style="left:1331px;top:205px;height:27px"></div>
<div class="t" style="left:1232px;top:212px;letter-spacing:-0.15px">Out Time</div>
<svg class="a" style="left:1307px;top:214px" width="11" height="8" viewBox="0 0 11 8"><path d="M0.4 0.6H10.6L7 4.4V7.5H4V4.4Z" fill="#e2e2e2" stroke="#000" stroke-width="1.05" stroke-linejoin="miter"/></svg>
<svg class="a" style="left:1320px;top:215px" width="9" height="7" viewBox="0 0 9 7" shape-rendering="crispEdges"><path d="M0 3.5h3M3.5 0v7M4 1.5h5M8.5 1v5" stroke="#000" fill="none"/><path d="M4 5h5" stroke="#000" stroke-width="2"/></svg>
<div class="hb" style="left:1335px;top:207px;width:4px;border-right:none"></div>
<div class="hl" style="left:296px;top:231px;width:1043px"></div>
<div class="a" style="left:296px;top:233px;width:1043px;height:433px;overflow:hidden">
<div class="a" style="left:19px;top:0px;width:1024px;height:23px;background:#fff;border-bottom:1px solid #a0a0a0"></div>
<div class="a" style="left:0;top:0px;width:19px;height:23px;background:#f2f2fb;border-right:1px solid #a9a9a9;border-bottom:1px solid #dcdcec"></div>
<div class="a" style="left:2px;top:0px;width:14px;height:20px;border:1px solid #e3e3e8;background:linear-gradient(#fff 55%,#f3f3f5 55%)"></div>
<svg class="a" style="left:7px;top:6px" width="6" height="9"><path d="M0 0V9L5.4 4.5Z" fill="#000"/></svg>
<div class="t bl" style="left:25px;top:4px;letter-spacing:0.25px">SIM-00001</div>
<div class="t bl" style="left:129px;top:4px;letter-spacing:0.03px">Mr.Toshiki Koga</div>
<div class="t bl" style="left:227px;top:4px;letter-spacing:-0.1px">Shacho</div>
<div class="t bl c" style="left:306px;top:4px;width:96px;letter-spacing:0.9px">26/12/2022</div>
<div class="t" style="left:408px;top:4px;color:#222">M</div>
<div class="t bl" style="left:502px;top:4px;letter-spacing:-0.05px">MONTHLY</div>
<div class="t bl" style="left:596px;top:4px">1</div>
<div class="t bl c" style="left:709px;top:4px;width:122px">Working Day</div>
<div class="t bl r" style="left:829px;top:4px;width:76px;letter-spacing:0.2px">9:00</div>
<div class="t bl r" style="left:909px;top:4px;width:124px;letter-spacing:0.2px">17:30</div>
<div class="a" style="left:19px;top:23px;width:1024px;height:23px;background:#b0c4de;border-bottom:1px solid #a0a0a0"></div>
<div class="a" style="left:0;top:23px;width:19px;height:23px;background:#f2f2fb;border-right:1px solid #a9a9a9;border-bottom:1px solid #dcdcec"></div>
<div class="a" style="left:2px;top:23px;width:14px;height:20px;border:1px solid #e3e3e8;background:linear-gradient(#fff 55%,#f3f3f5 55%)"></div>
<div class="t bl" style="left:25px;top:27px;letter-spacing:0.25px">SIM-00001</div>
<div class="t bl" style="left:129px;top:27px;letter-spacing:0.03px">Mr.Toshiki Koga</div>
<div class="t bl" style="left:227px;top:27px;letter-spacing:-0.1px">Shacho</div>
<div class="t bl c" style="left:306px;top:27px;width:96px;letter-spacing:0.9px">27/12/2022</div>
<div class="t" style="left:408px;top:27px;color:#222">M</div>
<div class="t bl" style="left:502px;top:27px;letter-spacing:-0.05px">MONTHLY</div>
<div class="t bl" style="left:596px;top:27px">1</div>
<div class="t bl c" style="left:709px;top:27px;width:122px">Working Day</div>
<div class="t bl r" style="left:829px;top:27px;width:76px;letter-spacing:0.2px">9:00</div>
<div class="t bl r" style="left:909px;top:27px;width:124px;letter-spacing:0.2px">17:30</div>
<div class="a" style="left:19px;top:46px;width:1024px;height:23px;background:#fff;border-bottom:1px solid #a0a0a0"></div>
<div class="a" style="left:0;top:46px;width:19px;height:23px;background:#f2f2fb;border-right:1px solid #a9a9a9;border-bottom:1px solid #dcdcec"></div>
<div class="a" style="left:2px;top:46px;width:14px;height:20px;border:1px solid #e3e3e8;background:linear-gradient(#fff 55%,#f3f3f5 55%)"></div>
<div class="t bl" style="left:25px;top:50px;letter-spacing:0.25px">SIM-00001</div>
<div class="t bl" style="left:129px;top:50px;letter-spacing:0.03px">Mr.Toshiki Koga</div>
<div class="t bl" style="left:227px;top:50px;letter-spacing:-0.1px">Shacho</div>
<div class="t bl c" style="left:306px;top:50px;width:96px;letter-spacing:0.9px">28/12/2022</div>
<div class="t" style="left:408px;top:50px;color:#222">M</div>
<div class="t bl" style="left:502px;top:50px;letter-spacing:-0.05px">MONTHLY</div>
<div class="t bl" style="left:596px;top:50px">1</div>
<div class="t bl c" style="left:709px;top:50px;width:122px">Working Day</div>
<div class="t bl r" style="left:829px;top:50px;width:76px;letter-spacing:0.2px">9:00</div>
<div class="t bl r" style="left:909px;top:50px;width:124px;letter-spacing:0.2px">17:30</div>
<div class="a" style="left:19px;top:69px;width:1024px;height:23px;background:#b0c4de;border-bottom:1px solid #a0a0a0"></div>
<div class="a" style="left:0;top:69px;width:19px;height:23px;background:#f2f2fb;border-right:1px solid #a9a9a9;border-bottom:1px solid #dcdcec"></div>
<div class="a" style="left:2px;top:69px;width:14px;height:20px;border:1px solid #e3e3e8;background:linear-gradient(#fff 55%,#f3f3f5 55%)"></div>
<div class="t bl" style="left:25px;top:73px;letter-spacing:0.25px">SIM-00001</div>
<div class="t bl" style="left:129px;top:73px;letter-spacing:0.03px">Mr.Toshiki Koga</div>
<div class="t bl" style="left:227px;top:73px;letter-spacing:-0.1px">Shacho</div>
<div class="t bl c" style="left:306px;top:73px;width:96px;letter-spacing:0.9px">29/12/2022</div>
<div class="t" style="left:408px;top:73px;color:#222">M</div>
<div class="t bl" style="left:502px;top:73px;letter-spacing:-0.05px">MONTHLY</div>
<div class="t bl" style="left:596px;top:73px">1</div>
<div class="t bl c" style="left:709px;top:73px;width:122px">Working Day</div>
<div class="t bl r" style="left:829px;top:73px;width:76px;letter-spacing:0.2px">9:00</div>
<div class="t bl r" style="left:909px;top:73px;width:124px;letter-spacing:0.2px">17:30</div>
<div class="a" style="left:19px;top:92px;width:1024px;height:23px;background:#fff;border-bottom:1px solid #a0a0a0"></div>
<div class="a" style="left:0;top:92px;width:19px;height:23px;background:#f2f2fb;border-right:1px solid #a9a9a9;border-bottom:1px solid #dcdcec"></div>
<div class="a" style="left:2px;top:92px;width:14px;height:20px;border:1px solid #e3e3e8;background:linear-gradient(#fff 55%,#f3f3f5 55%)"></div>
<div class="t bl" style="left:25px;top:96px;letter-spacing:0.25px">SIM-00001</div>
<div class="t bl" style="left:129px;top:96px;letter-spacing:0.03px">Mr.Toshiki Koga</div>
<div class="t bl" style="left:227px;top:96px;letter-spacing:-0.1px">Shacho</div>
<div class="t bl c" style="left:306px;top:96px;width:96px;letter-spacing:0.9px">30/12/2022</div>
<div class="t" style="left:408px;top:96px;color:#222">H</div>
<div class="t bl" style="left:502px;top:96px;letter-spacing:-0.05px">MONTHLY</div>
<div class="t bl" style="left:596px;top:96px">1</div>
<div class="t bl c" style="left:709px;top:96px;width:122px">Holiday</div>
<div class="t bl r" style="left:829px;top:96px;width:76px;letter-spacing:0.2px">8:30</div>
<div class="t bl r" style="left:909px;top:96px;width:124px;letter-spacing:0.2px">17:30</div>
<div class="a" style="left:19px;top:115px;width:1024px;height:23px;background:#b0c4de;border-bottom:1px solid #a0a0a0"></div>
<div class="a" style="left:0;top:115px;width:19px;height:23px;background:#f2f2fb;border-right:1px solid #a9a9a9;border-bottom:1px solid #dcdcec"></div>
<div class="a" style="left:2px;top:115px;width:14px;height:20px;border:1px solid #e3e3e8;background:linear-gradient(#fff 55%,#f3f3f5 55%)"></div>
<div class="t bl" style="left:25px;top:119px;letter-spacing:0.25px">SIM-00001</div>
<div class="t bl" style="left:129px;top:119px;letter-spacing:0.03px">Mr.Toshiki Koga</div>
<div class="t bl" style="left:227px;top:119px;letter-spacing:-0.1px">Shacho</div>
<div class="t bl c" style="left:306px;top:119px;width:96px;letter-spacing:0.9px">31/12/2022</div>
<div class="t" style="left:408px;top:119px;color:#222">H</div>
<div class="t bl" style="left:502px;top:119px;letter-spacing:-0.05px">MONTHLY</div>
<div class="t bl" style="left:596px;top:119px">1</div>
<div class="t bl c" style="left:709px;top:119px;width:122px">Holiday</div>
<div class="t bl r" style="left:829px;top:119px;width:76px;letter-spacing:0.2px">8:30</div>
<div class="t bl r" style="left:909px;top:119px;width:124px;letter-spacing:0.2px">17:30</div>
<div class="a" style="left:19px;top:138px;width:1024px;height:23px;background:#fff;border-bottom:1px solid #a0a0a0"></div>
<div class="a" style="left:0;top:138px;width:19px;height:23px;background:#f2f2fb;border-right:1px solid #a9a9a9;border-bottom:1px solid #dcdcec"></div>
<div class="a" style="left:2px;top:138px;width:14px;height:20px;border:1px solid #e3e3e8;background:linear-gradient(#fff 55%,#f3f3f5 55%)"></div>
<div class="t bl" style="left:25px;top:142px;letter-spacing:0.25px">SIM-00001</div>
<div class="t bl" style="left:129px;top:142px;letter-spacing:0.03px">Mr.Toshiki Koga</div>
<div class="t bl" style="left:227px;top:142px;letter-spacing:-0.1px">Shacho</div>
<div class="t bl c" style="left:306px;top:142px;width:96px;letter-spacing:0.9px">01/01/2023</div>
<div class="t" style="left:408px;top:142px;color:#222">H</div>
<div class="t bl" style="left:502px;top:142px;letter-spacing:-0.05px">MONTHLY</div>
<div class="t bl" style="left:596px;top:142px">1</div>
<div class="t bl c" style="left:709px;top:142px;width:122px">Holiday</div>
<div class="t bl r" style="left:829px;top:142px;width:76px;letter-spacing:0.2px">8:30</div>
<div class="t bl r" style="left:909px;top:142px;width:124px;letter-spacing:0.2px">17:30</div>
<div class="a" style="left:19px;top:161px;width:1024px;height:23px;background:#b0c4de;border-bottom:1px solid #a0a0a0"></div>
<div class="a" style="left:0;top:161px;width:19px;height:23px;background:#f2f2fb;border-right:1px solid #a9a9a9;border-bottom:1px solid #dcdcec"></div>
<div class="a" style="left:2px;top:161px;width:14px;height:20px;border:1px solid #e3e3e8;background:linear-gradient(#fff 55%,#f3f3f5 55%)"></div>
<div class="t bl" style="left:25px;top:165px;letter-spacing:0.25px">SIM-00001</div>
<div class="t bl" style="left:129px;top:165px;letter-spacing:0.03px">Mr.Toshiki Koga</div>
<div class="t bl" style="left:227px;top:165px;letter-spacing:-0.1px">Shacho</div>
<div class="t bl c" style="left:306px;top:165px;width:96px;letter-spacing:0.9px">02/01/2023</div>
<div class="t" style="left:408px;top:165px;color:#222">H</div>
<div class="t bl" style="left:502px;top:165px;letter-spacing:-0.05px">MONTHLY</div>
<div class="t bl" style="left:596px;top:165px">1</div>
<div class="t bl c" style="left:709px;top:165px;width:122px">Holiday</div>
<div class="t bl r" style="left:829px;top:165px;width:76px;letter-spacing:0.2px">8:30</div>
<div class="t bl r" style="left:909px;top:165px;width:124px;letter-spacing:0.2px">17:30</div>
<div class="a" style="left:19px;top:184px;width:1024px;height:23px;background:#fff;border-bottom:1px solid #a0a0a0"></div>
<div class="a" style="left:0;top:184px;width:19px;height:23px;background:#f2f2fb;border-right:1px solid #a9a9a9;border-bottom:1px solid #dcdcec"></div>
<div class="a" style="left:2px;top:184px;width:14px;height:20px;border:1px solid #e3e3e8;background:linear-gradient(#fff 55%,#f3f3f5 55%)"></div>
<div class="t bl" style="left:25px;top:188px;letter-spacing:0.25px">SIM-00001</div>
<div class="t bl" style="left:129px;top:188px;letter-spacing:0.03px">Mr.Toshiki Koga</div>
<div class="t bl" style="left:227px;top:188px;letter-spacing:-0.1px">Shacho</div>
<div class="t bl c" style="left:306px;top:188px;width:96px;letter-spacing:0.9px">03/01/2023</div>
<div class="t" style="left:408px;top:188px;color:#222">M</div>
<div class="t bl" style="left:502px;top:188px;letter-spacing:-0.05px">MONTHLY</div>
<div class="t bl" style="left:596px;top:188px">1</div>
<div class="t bl c" style="left:709px;top:188px;width:122px">Working Day</div>
<div class="t bl r" style="left:829px;top:188px;width:76px;letter-spacing:0.2px">9:00</div>
<div class="t bl r" style="left:909px;top:188px;width:124px;letter-spacing:0.2px">17:30</div>
<div class="a" style="left:19px;top:207px;width:1024px;height:23px;background:#b0c4de;border-bottom:1px solid #a0a0a0"></div>
<div class="a" style="left:0;top:207px;width:19px;height:23px;background:#f2f2fb;border-right:1px solid #a9a9a9;border-bottom:1px solid #dcdcec"></div>
<div class="a" style="left:2px;top:207px;width:14px;height:20px;border:1px solid #e3e3e8;background:linear-gradient(#fff 55%,#f3f3f5 55%)"></div>
<div class="t bl" style="left:25px;top:211px;letter-spacing:0.25px">SIM-00001</div>
<div class="t bl" style="left:129px;top:211px;letter-spacing:0.03px">Mr.Toshiki Koga</div>
<div class="t bl" style="left:227px;top:211px;letter-spacing:-0.1px">Shacho</div>
<div class="t bl c" style="left:306px;top:211px;width:96px;letter-spacing:0.9px">04/01/2023</div>
<div class="t" style="left:408px;top:211px;color:#222">M</div>
<div class="t bl" style="left:502px;top:211px;letter-spacing:-0.05px">MONTHLY</div>
<div class="t bl" style="left:596px;top:211px">1</div>
<div class="t bl c" style="left:709px;top:211px;width:122px">Working Day</div>
<div class="t bl r" style="left:829px;top:211px;width:76px;letter-spacing:0.2px">9:00</div>
<div class="t bl r" style="left:909px;top:211px;width:124px;letter-spacing:0.2px">17:30</div>
<div class="a" style="left:19px;top:230px;width:1024px;height:23px;background:#fff;border-bottom:1px solid #a0a0a0"></div>
<div class="a" style="left:0;top:230px;width:19px;height:23px;background:#f2f2fb;border-right:1px solid #a9a9a9;border-bottom:1px solid #dcdcec"></div>
<div class="a" style="left:2px;top:230px;width:14px;height:20px;border:1px solid #e3e3e8;background:linear-gradient(#fff 55%,#f3f3f5 55%)"></div>
<div class="t bl" style="left:25px;top:234px;letter-spacing:0.25px">SIM-00001</div>
<div class="t bl" style="left:129px;top:234px;letter-spacing:0.03px">Mr.Toshiki Koga</div>
<div class="t bl" style="left:227px;top:234px;letter-spacing:-0.1px">Shacho</div>
<div class="t bl c" style="left:306px;top:234px;width:96px;letter-spacing:0.9px">05/01/2023</div>
<div class="t" style="left:408px;top:234px;color:#222">M</div>
<div class="t bl" style="left:502px;top:234px;letter-spacing:-0.05px">MONTHLY</div>
<div class="t bl" style="left:596px;top:234px">1</div>
<div class="t bl c" style="left:709px;top:234px;width:122px">Working Day</div>
<div class="t bl r" style="left:829px;top:234px;width:76px;letter-spacing:0.2px">9:00</div>
<div class="t bl r" style="left:909px;top:234px;width:124px;letter-spacing:0.2px">17:30</div>
<div class="a" style="left:19px;top:253px;width:1024px;height:23px;background:#b0c4de;border-bottom:1px solid #a0a0a0"></div>
<div class="a" style="left:0;top:253px;width:19px;height:23px;background:#f2f2fb;border-right:1px solid #a9a9a9;border-bottom:1px solid #dcdcec"></div>
<div class="a" style="left:2px;top:253px;width:14px;height:20px;border:1px solid #e3e3e8;background:linear-gradient(#fff 55%,#f3f3f5 55%)"></div>
<div class="t bl" style="left:25px;top:257px;letter-spacing:0.25px">SIM-00001</div>
<div class="t bl" style="left:129px;top:257px;letter-spacing:0.03px">Mr.Toshiki Koga</div>
<div class="t bl" style="left:227px;top:257px;letter-spacing:-0.1px">Shacho</div>
<div class="t bl c" style="left:306px;top:257px;width:96px;letter-spacing:0.9px">06/01/2023</div>
<div class="t" style="left:408px;top:257px;color:#222">M</div>
<div class="t bl" style="left:502px;top:257px;letter-spacing:-0.05px">MONTHLY</div>
<div class="t bl" style="left:596px;top:257px">1</div>
<div class="t bl c" style="left:709px;top:257px;width:122px">Working Day</div>
<div class="t bl r" style="left:829px;top:257px;width:76px;letter-spacing:0.2px">9:00</div>
<div class="t bl r" style="left:909px;top:257px;width:124px;letter-spacing:0.2px">17:30</div>
<div class="a" style="left:19px;top:276px;width:1024px;height:23px;background:#fff;border-bottom:1px solid #a0a0a0"></div>
<div class="a" style="left:0;top:276px;width:19px;height:23px;background:#f2f2fb;border-right:1px solid #a9a9a9;border-bottom:1px solid #dcdcec"></div>
<div class="a" style="left:2px;top:276px;width:14px;height:20px;border:1px solid #e3e3e8;background:linear-gradient(#fff 55%,#f3f3f5 55%)"></div>
<div class="t bl" style="left:25px;top:280px;letter-spacing:0.25px">SIM-00001</div>
<div class="t bl" style="left:129px;top:280px;letter-spacing:0.03px">Mr.Toshiki Koga</div>
<div class="t bl" style="left:227px;top:280px;letter-spacing:-0.1px">Shacho</div>
<div class="t bl c" style="left:306px;top:280px;width:96px;letter-spacing:0.9px">07/01/2023</div>
<div class="t" style="left:408px;top:280px;color:#222">H</div>
<div class="t bl" style="left:502px;top:280px;letter-spacing:-0.05px">MONTHLY</div>
<div class="t bl" style="left:596px;top:280px">1</div>
<div class="t bl c" style="left:709px;top:280px;width:122px">Holiday</div>
<div class="t bl r" style="left:829px;top:280px;width:76px;letter-spacing:0.2px">8:30</div>
<div class="t bl r" style="left:909px;top:280px;width:124px;letter-spacing:0.2px">17:30</div>
<div class="a" style="left:19px;top:299px;width:1024px;height:23px;background:#b0c4de;border-bottom:1px solid #a0a0a0"></div>
<div class="a" style="left:0;top:299px;width:19px;height:23px;background:#f2f2fb;border-right:1px solid #a9a9a9;border-bottom:1px solid #dcdcec"></div>
<div class="a" style="left:2px;top:299px;width:14px;height:20px;border:1px solid #e3e3e8;background:linear-gradient(#fff 55%,#f3f3f5 55%)"></div>
<div class="t bl" style="left:25px;top:303px;letter-spacing:0.25px">SIM-00001</div>
<div class="t bl" style="left:129px;top:303px;letter-spacing:0.03px">Mr.Toshiki Koga</div>
<div class="t bl" style="left:227px;top:303px;letter-spacing:-0.1px">Shacho</div>
<div class="t bl c" style="left:306px;top:303px;width:96px;letter-spacing:0.9px">08/01/2023</div>
<div class="t" style="left:408px;top:303px;color:#222">H</div>
<div class="t bl" style="left:502px;top:303px;letter-spacing:-0.05px">MONTHLY</div>
<div class="t bl" style="left:596px;top:303px">1</div>
<div class="t bl c" style="left:709px;top:303px;width:122px">Holiday</div>
<div class="t bl r" style="left:829px;top:303px;width:76px;letter-spacing:0.2px">8:30</div>
<div class="t bl r" style="left:909px;top:303px;width:124px;letter-spacing:0.2px">17:30</div>
<div class="a" style="left:19px;top:322px;width:1024px;height:23px;background:#fff;border-bottom:1px solid #a0a0a0"></div>
<div class="a" style="left:0;top:322px;width:19px;height:23px;background:#f2f2fb;border-right:1px solid #a9a9a9;border-bottom:1px solid #dcdcec"></div>
<div class="a" style="left:2px;top:322px;width:14px;height:20px;border:1px solid #e3e3e8;background:linear-gradient(#fff 55%,#f3f3f5 55%)"></div>
<div class="t bl" style="left:25px;top:326px;letter-spacing:0.25px">SIM-00001</div>
<div class="t bl" style="left:129px;top:326px;letter-spacing:0.03px">Mr.Toshiki Koga</div>
<div class="t bl" style="left:227px;top:326px;letter-spacing:-0.1px">Shacho</div>
<div class="t bl c" style="left:306px;top:326px;width:96px;letter-spacing:0.9px">09/01/2023</div>
<div class="t" style="left:408px;top:326px;color:#222">M</div>
<div class="t bl" style="left:502px;top:326px;letter-spacing:-0.05px">MONTHLY</div>
<div class="t bl" style="left:596px;top:326px">1</div>
<div class="t bl c" style="left:709px;top:326px;width:122px">Working Day</div>
<div class="t bl r" style="left:829px;top:326px;width:76px;letter-spacing:0.2px">9:00</div>
<div class="t bl r" style="left:909px;top:326px;width:124px;letter-spacing:0.2px">17:30</div>
<div class="a" style="left:19px;top:345px;width:1024px;height:23px;background:#b0c4de;border-bottom:1px solid #a0a0a0"></div>
<div class="a" style="left:0;top:345px;width:19px;height:23px;background:#f2f2fb;border-right:1px solid #a9a9a9;border-bottom:1px solid #dcdcec"></div>
<div class="a" style="left:2px;top:345px;width:14px;height:20px;border:1px solid #e3e3e8;background:linear-gradient(#fff 55%,#f3f3f5 55%)"></div>
<div class="t bl" style="left:25px;top:349px;letter-spacing:0.25px">SIM-00001</div>
<div class="t bl" style="left:129px;top:349px;letter-spacing:0.03px">Mr.Toshiki Koga</div>
<div class="t bl" style="left:227px;top:349px;letter-spacing:-0.1px">Shacho</div>
<div class="t bl c" style="left:306px;top:349px;width:96px;letter-spacing:0.9px">10/01/2023</div>
<div class="t" style="left:408px;top:349px;color:#222">M</div>
<div class="t bl" style="left:502px;top:349px;letter-spacing:-0.05px">MONTHLY</div>
<div class="t bl" style="left:596px;top:349px">1</div>
<div class="t bl c" style="left:709px;top:349px;width:122px">Working Day</div>
<div class="t bl r" style="left:829px;top:349px;width:76px;letter-spacing:0.2px">9:00</div>
<div class="t bl r" style="left:909px;top:349px;width:124px;letter-spacing:0.2px">17:30</div>
<div class="a" style="left:19px;top:368px;width:1024px;height:23px;background:#fff;border-bottom:1px solid #a0a0a0"></div>
<div class="a" style="left:0;top:368px;width:19px;height:23px;background:#f2f2fb;border-right:1px solid #a9a9a9;border-bottom:1px solid #dcdcec"></div>
<div class="a" style="left:2px;top:368px;width:14px;height:20px;border:1px solid #e3e3e8;background:linear-gradient(#fff 55%,#f3f3f5 55%)"></div>
<div class="t bl" style="left:25px;top:372px;letter-spacing:0.25px">SIM-00001</div>
<div class="t bl" style="left:129px;top:372px;letter-spacing:0.03px">Mr.Toshiki Koga</div>
<div class="t bl" style="left:227px;top:372px;letter-spacing:-0.1px">Shacho</div>
<div class="t bl c" style="left:306px;top:372px;width:96px;letter-spacing:0.9px">11/01/2023</div>
<div class="t" style="left:408px;top:372px;color:#222">M</div>
<div class="t bl" style="left:502px;top:372px;letter-spacing:-0.05px">MONTHLY</div>
<div class="t bl" style="left:596px;top:372px">1</div>
<div class="t bl c" style="left:709px;top:372px;width:122px">Working Day</div>
<div class="t bl r" style="left:829px;top:372px;width:76px;letter-spacing:0.2px">9:00</div>
<div class="t bl r" style="left:909px;top:372px;width:124px;letter-spacing:0.2px">17:30</div>
<div class="a" style="left:19px;top:391px;width:1024px;height:23px;background:#b0c4de;border-bottom:1px solid #a0a0a0"></div>
<div class="a" style="left:0;top:391px;width:19px;height:23px;background:#f2f2fb;border-right:1px solid #a9a9a9;border-bottom:1px solid #dcdcec"></div>
<div class="a" style="left:2px;top:391px;width:14px;height:20px;border:1px solid #e3e3e8;background:linear-gradient(#fff 55%,#f3f3f5 55%)"></div>
<div class="t bl" style="left:25px;top:395px;letter-spacing:0.25px">SIM-00001</div>
<div class="t bl" style="left:129px;top:395px;letter-spacing:0.03px">Mr.Toshiki Koga</div>
<div class="t bl" style="left:227px;top:395px;letter-spacing:-0.1px">Shacho</div>
<div class="t bl c" style="left:306px;top:395px;width:96px;letter-spacing:0.9px">12/01/2023</div>
<div class="t" style="left:408px;top:395px;color:#222">M</div>
<div class="t bl" style="left:502px;top:395px;letter-spacing:-0.05px">MONTHLY</div>
<div class="t bl" style="left:596px;top:395px">1</div>
<div class="t bl c" style="left:709px;top:395px;width:122px">Working Day</div>
<div class="t bl r" style="left:829px;top:395px;width:76px;letter-spacing:0.2px">9:00</div>
<div class="t bl r" style="left:909px;top:395px;width:124px;letter-spacing:0.2px">17:30</div>
<div class="a" style="left:19px;top:414px;width:1024px;height:23px;background:#fff;border-bottom:1px solid #a0a0a0"></div>
<div class="a" style="left:0;top:414px;width:19px;height:23px;background:#f2f2fb;border-right:1px solid #a9a9a9;border-bottom:1px solid #dcdcec"></div>
<div class="a" style="left:2px;top:414px;width:14px;height:20px;border:1px solid #e3e3e8;background:linear-gradient(#fff 55%,#f3f3f5 55%)"></div>
<div class="t bl" style="left:25px;top:418px;letter-spacing:0.25px">SIM-00001</div>
<div class="t bl" style="left:129px;top:418px;letter-spacing:0.03px">Mr.Toshiki Koga</div>
<div class="t bl" style="left:227px;top:418px;letter-spacing:-0.1px">Shacho</div>
<div class="t bl c" style="left:306px;top:418px;width:96px;letter-spacing:0.9px">13/01/2023</div>
<div class="t" style="left:408px;top:418px;color:#222">M</div>
<div class="t bl" style="left:502px;top:418px;letter-spacing:-0.05px">MONTHLY</div>
<div class="t bl" style="left:596px;top:418px">1</div>
<div class="t bl c" style="left:709px;top:418px;width:122px">Working Day</div>
<div class="t bl r" style="left:829px;top:418px;width:76px;letter-spacing:0.2px">9:00</div>
<div class="t bl r" style="left:909px;top:418px;width:124px;letter-spacing:0.2px">17:30</div>
<div class="vl" style="left:122px;top:0;height:433px;background:#a9a9a9"></div>
<div class="vl" style="left:220px;top:0;height:433px;background:#a9a9a9"></div>
<div class="vl" style="left:306px;top:0;height:433px;background:#a9a9a9"></div>
<div class="vl" style="left:400px;top:0;height:433px;background:#a9a9a9"></div>
<div class="vl" style="left:495px;top:0;height:433px;background:#6e6e6e"></div>
<div class="vl" style="left:589px;top:0;height:433px;background:#a9a9a9"></div>
<div class="vl" style="left:708px;top:0;height:433px;background:#a9a9a9"></div>
<div class="vl" style="left:828px;top:0;height:433px;background:#a9a9a9"></div>
<div class="vl" style="left:908px;top:0;height:433px;background:#a9a9a9"></div>
<div class="vl" style="left:1036px;top:0;height:433px;background:#a9a9a9"></div>
</div>
<div class="a" style="left:1339px;top:205px;width:17px;height:461px;background:#f0f0f0"></div><div class="a" style="left:1339px;top:205px;width:17px;height:5px;background:#9ccfd4"></div>
<svg class="a" style="left:1344px;top:218px" width="8" height="4"><path d="M0 4H7.4L3.7 0Z" fill="#3a4767"/></svg><svg class="a" style="left:1344px;top:655px" width="8" height="5"><path d="M0 0H8L4 5Z" fill="#3a4767"/></svg>
<div class="a" style="left:1340px;top:228px;width:15px;height:11px;border:1px solid #9a9a9a;background:linear-gradient(90deg,#f4f4f4,#c6c6c6)"></div><div class="a" style="left:1344px;top:230px;width:6px;height:7px;background:repeating-linear-gradient(#666 0,#666 1px,transparent 1px,transparent 2px)"></div>
<div class="a" style="left:296px;top:666px;width:1060px;height:17px;background:#f0f0f0"></div><div class="a" style="left:296px;top:666px;width:4px;height:17px;background:#9ccfd4"></div>
<svg class="a" style="left:307px;top:671px" width="5" height="8"><path d="M5 0V8L0 4Z" fill="#3a4767"/></svg><svg class="a" style="left:1328px;top:671px" width="5" height="8"><path d="M0 0V8L5 4Z" fill="#3a4767"/></svg>
<div class="a" style="left:319px;top:667px;width:123px;height:15px;border:1px solid #999;border-radius:2px;background:linear-gradient(#e6e6e6,#c9c9c9)"></div>
<div class="a" style="left:377px;top:672px;width:8px;height:6px;background:repeating-linear-gradient(90deg,#666 0,#666 1px,transparent 1px,transparent 2px)"></div>
<div class="a" style="left:295px;top:685px;width:1062px;height:20px;background:#e0ffff;border-top:1px solid #999"></div>
<div class="btn" style="left:295px;top:685px;width:24px;height:22px;line-height:20px;border-color:#707070;">|&lt;</div>
<div class="btn" style="left:319px;top:685px;width:24px;height:22px;line-height:20px;border-color:#707070;">&lt;</div>
<div class="btn" style="left:455px;top:685px;width:24px;height:22px;line-height:20px;border-color:#707070;">&gt;</div>
<div class="btn" style="left:479px;top:685px;width:24px;height:22px;line-height:20px;border-color:#707070;">&gt;|</div>
<div class="btn" style="left:503px;top:685px;width:36px;height:22px;line-height:20px;border-color:#707070;"></div>
<div class="btn" style="left:540px;top:686px;width:96px;height:19px;line-height:17px;border-color:#a8a8a8;background:#f0f0f0;box-shadow:none;letter-spacing:0">0%</div>
<div class="t r" style="left:344px;top:687px;width:108px;letter-spacing:-0.3px">1 / 496</div>
<svg class="a" style="left:512px;top:687px" width="18" height="15" viewBox="0 0 18 15"><path d="M5 1H14.5L12.5 6H3Z" fill="#f6f6f6" stroke="#666" stroke-width="1"/><path d="M6.2 2.6H12.6M5.5 4.3H11.9" stroke="#777" stroke-width=".9"/><path d="M1 8.6L3 6H13L16.6 3.8V9.6L13.4 13.6H1.8L1 11.8Z" fill="#8e8e8e" stroke="#5e5e5e" stroke-width="1"/><path d="M1.4 9.6H13M1.6 11.4H13" stroke="#dcdcdc" stroke-width=".8"/><path d="M13.6 8.5L16.2 5.6M13.8 10.8L16.2 8" stroke="#c8c8c8" stroke-width=".7"/></svg>
<div class="a" style="left:286px;top:711px;width:1079px;height:24px;background:#f0f0f0"></div>
<div class="a" style="left:565px;top:711px;width:800px;height:20px;background:#e0ffff;border-top:1px solid #a0a0a0"></div>
<div class="btn" style="left:289px;top:712px;width:166px;height:20px;line-height:18px;border-color:#a8a8a8;background:#f0f0f0;box-shadow:none;letter-spacing:0">0%</div>
<div class="btn" style="left:457px;top:711px;width:36px;height:23px;border-color:#707070"></div>
<div class="btn" style="left:493px;top:711px;width:36px;height:23px;border-color:#707070"></div>
<div class="btn" style="left:529px;top:711px;width:36px;height:23px;line-height:20px;border-color:#707070;color:#0a0aff;font-weight:700;font-size:12px;letter-spacing:0"><span style="display:inline-block;transform:scaleX(.89)">SQL</span></div>
<svg class="a" style="left:468px;top:714px" width="15" height="14" viewBox="0 0 15 14"><path d="M1.4 1.4H10.2L13.4 4.6V12.2H1.4Z" fill="#fff" stroke="#000" stroke-width="1.3"/><path d="M4.2 6.6A3.2 3.2 0 0 1 9.6 4.4" fill="none" stroke="#17a52c" stroke-width="1.7"/><path d="M8.6 2.4L11.4 5.6L7.6 5.8Z" fill="#17a52c"/><path d="M10.6 7.2A3.2 3.2 0 0 1 5.2 9.4" fill="none" stroke="#17a52c" stroke-width="1.7"/><path d="M6.2 11.4L3.4 8.2L7.2 8Z" fill="#17a52c"/></svg>
<svg class="a" style="left:503px;top:714px" width="17" height="13" viewBox="0 0 17 13"><path d="M3 1L6.5 0.5L9 12H6Z" fill="#bcbcbc"/><path d="M6.5 2L9.5 0.8L12.5 12H9Z" fill="#a9a9a9"/><path d="M9 4L11.5 2.5L15 12H12Z" fill="#b4b4b4"/><path d="M11 7L13 5.5L16 9V12H13Z" fill="#a2a2a2"/><rect x="5" y="9.5" width="11" height="3" fill="#9c9c9c"/><rect x="2.5" y="10.5" width="1.2" height="1.2" fill="#8c8c8c"/></svg>
</body></html>
